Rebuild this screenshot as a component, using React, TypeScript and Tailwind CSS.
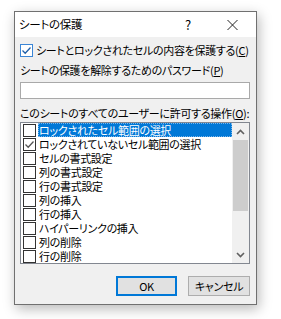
const font = "[font-family:'Noto_Sans_CJK_JP','Noto_Sans',sans-serif] [font-feature-settings:'palt']";

const items = [
  { label: "ロックされたセル範囲の選択", checked: false, selected: true },
  { label: "ロックされていないセル範囲の選択", checked: true },
  { label: "セルの書式設定", checked: false },
  { label: "列の書式設定", checked: false },
  { label: "行の書式設定", checked: false },
  { label: "列の挿入", checked: false },
  { label: "行の挿入", checked: false },
  { label: "ハイパーリンクの挿入", checked: false },
  { label: "列の削除", checked: false },
  { label: "行の削除", checked: false },
];

function Check({ color }: { color: string }) {
  return (
    <svg width="11" height="11" viewBox="0 0 11 11">
      <path d="M1.5 5.5 L4.2 8.2 L9.5 2.5" fill="none" stroke={color} strokeWidth="1.3" />
    </svg>
  );
}

export default function App() {
  return (
    <div className={`w-[281px] h-[319px] bg-white pt-[11px] pl-[14px] text-[11px] tracking-[-0.3px] leading-none text-black ${font}`}>
      <div className="w-[243px] h-[294px] border border-[#707070] bg-[#f0f0f0] shadow-[2px_4px_12px_rgba(0,0,0,0.28)] flex flex-col">
        {/* Title bar */}
        <div className="h-[25px] bg-white flex items-center pl-[4px] relative">
          <span className="text-[11.5px]">シートの保護</span>
          <span className="absolute left-[170px] top-[6px] text-[13px]">?</span>
          <svg className="absolute left-[212px] top-[8px]" width="11" height="10" viewBox="0 0 11 10">
            <path d="M0.5 0 L10.5 10 M10.5 0 L0.5 10" stroke="#222" strokeWidth="1" />
          </svg>
        </div>

        {/* Body */}
        <div className="px-[5px] flex flex-col">
          <div className="mt-[6px] h-[14px] flex items-center">
            <span className="w-[13px] h-[13px] border border-[#3b86d6] bg-white flex items-center justify-center shrink-0">
              <Check color="#1f5fa8" />
            </span>
            <span className="ml-[3px] whitespace-nowrap">
              シートとロックされたセルの内容を保護する(<u>C</u>)
            </span>
          </div>

          <div className="mt-[5px] h-[16px] flex items-center whitespace-nowrap">
            シートの保護を解除するためのパスワード(<u>P</u>)
          </div>

          <div className="mt-[4px] h-[17px] w-[230px] border border-[#a9a9a9] bg-white" />

          <div className="mt-[6px] h-[16px] flex items-center whitespace-nowrap">
            このシートのすべてのユーザーに許可する操作(<u>O</u>):
          </div>

          <div className="mt-[1px] w-[230px] h-[142px] border border-[#828790] bg-white flex">
            <div className="flex-1 flex flex-col pl-[2px]">
              {items.map((it) => (
                <div key={it.label} className="h-[14px] flex items-center">
                  <span className="w-[13px] h-[13px] border border-[#333] bg-white flex items-center justify-center shrink-0">
                    {it.checked && <Check color="#555" />}
                  </span>
                  {it.selected ? (
                    <span className="ml-[2px] h-[14px] flex-1 bg-[#0078d7] text-white flex items-center pl-[1px] outline outline-1 outline-dotted outline-[#7ab6ea] -outline-offset-1 whitespace-nowrap">
                      {it.label}
                    </span>
                  ) : (
                    <span className="ml-[2px] pl-[1px] whitespace-nowrap">{it.label}</span>
                  )}
                </div>
              ))}
            </div>

            {/* Scrollbar */}
            <div className="w-[17px] bg-[#f0f0f0] flex flex-col">
              <div className="h-[17px] flex items-center justify-center">
                <svg width="9" height="6" viewBox="0 0 9 6">
                  <path d="M1 5 L4.5 1.5 L8 5" fill="none" stroke="#606060" strokeWidth="1.6" />
                </svg>
              </div>
              <div className="h-[71px] mx-[1px] bg-[#cdcdcd]" />
              <div className="flex-1" />
              <div className="h-[17px] flex items-center justify-center">
                <svg width="9" height="6" viewBox="0 0 9 6">
                  <path d="M1 1 L4.5 4.5 L8 1" fill="none" stroke="#606060" strokeWidth="1.6" />
                </svg>
              </div>
            </div>
          </div>

          <div className="mt-[12px] flex justify-end gap-[11px] pr-[1px]">
            <button className="w-[61px] h-[20px] border-2 border-[#0078d7] bg-[#e1e1e1] flex items-center justify-center">
              OK
            </button>
            <button className="w-[62px] h-[20px] border border-[#adadad] bg-[#e1e1e1] flex items-center justify-center">
              キャンセル
            </button>
          </div>
        </div>
      </div>
    </div>
  );
}
